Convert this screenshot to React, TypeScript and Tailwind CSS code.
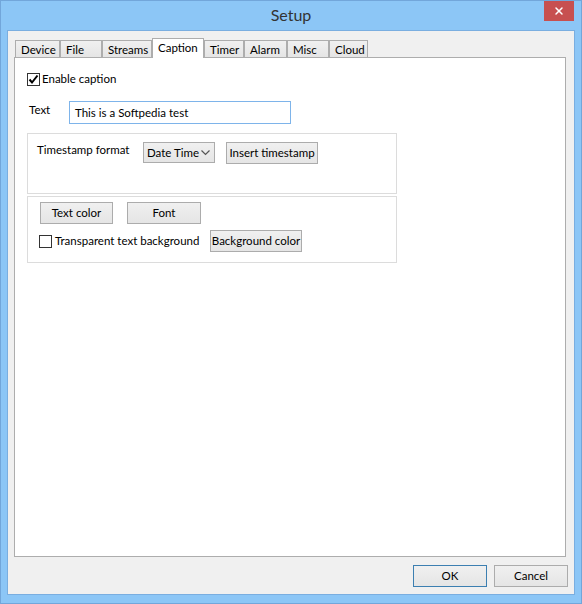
import { X } from 'lucide-react';

const font = { fontFamily: 'Lato, "Noto Sans", sans-serif' };

function Check({ checked }: { checked?: boolean }) {
    return (
        <span className="flex items-center justify-center w-[13px] h-[13px] border border-[#333333] bg-white shrink-0">
            {checked && (
                <svg width="11" height="11" viewBox="0 0 11 11">
                    <path d="M1.5 5.5 L4 8.5 L9.5 1.5" fill="none" stroke="#000" strokeWidth="2" />
                </svg>
            )}
        </span>
    );
}

function Btn({ label, w, blue }: { label: string; w: string; blue?: boolean }) {
    return (
        <button className={`${w} h-[22px] flex items-center justify-center whitespace-nowrap border ${blue ? 'border-[#3c7fb1]' : 'border-[#acacac]'} bg-gradient-to-b from-[#f0f0f0] to-[#e5e5e5] text-[11.5px] text-black leading-none`}>
            {label}
        </button>
    );
}

const tabs = [
    { name: 'Device', w: 'w-[45px]' },
    { name: 'File', w: 'w-[42px]' },
    { name: 'Streams', w: 'w-[50px]' },
    { name: 'Caption', w: 'w-[52px]', active: true },
    { name: 'Timer', w: 'w-[40px]' },
    { name: 'Alarm', w: 'w-[43px]' },
    { name: 'Misc', w: 'w-[42px]' },
    { name: 'Cloud', w: 'w-[39px]' },
];

export default function App() {
    return (
        <div style={font} className="w-[582px] h-[604px] bg-[#8cc6f6] border border-[#72a6da] flex flex-col text-[11.5px] leading-[16px] text-black whitespace-nowrap">
            {/* title bar */}
            <div className="h-[29px] relative flex justify-center pt-[5px]">
                <span className="text-[16px] leading-[18px] text-[#333]">Setup</span>
                <div className="absolute right-[7px] top-0 w-[30px] h-[20px] bg-[#c75050] flex items-center justify-center">
                    <X size={12} color="white" strokeWidth={3} />
                </div>
            </div>

            {/* client area */}
            <div className="mx-[6px] h-[565px] border border-[#7aaee0] bg-[#f0f0f0] flex flex-col">
                {/* tabs */}
                <div className="flex items-end h-[20px] mt-[7px] ml-[7px]">
                    {tabs.map((t) =>
                        t.active ? (
                            <div key={t.name} className={`${t.w} h-[20px] relative z-10 bg-white border border-b-0 border-[#adadad] pl-[5px] pt-[1px]`}>
                                {t.name}
                            </div>
                        ) : (
                            <div key={t.name} className={`${t.w} h-[18px] bg-gradient-to-b from-[#f0f0f0] to-[#e5e5e5] border border-[#adadad] pl-[5px] pt-[1px]`}>
                                {t.name}
                            </div>
                        )
                    )}
                </div>

                {/* panel */}
                <div className="ml-[6px] mt-[-1px] w-[552px] h-[500px] bg-white border border-[#adadad] flex flex-col">
                    <label className="flex items-center gap-[2px] ml-[12px] mt-[13px]">
                        <Check checked />
                        <span>Enable caption</span>
                    </label>

                    <div className="flex items-start ml-[14px] mt-[14px]">
                        <span className="w-[40px] mt-[1px]">Text</span>
                        <div className="w-[222px] h-[23px] border border-[#7eb4ea] flex items-center pl-[5px]">
                            This is a Softpedia test
                        </div>
                    </div>

                    {/* timestamp group */}
                    <div className="ml-[12px] mt-[9px] w-[370px] h-[61px] border border-[#dcdcdc] flex items-start">
                        <span className="ml-[9px] mt-[8px] w-[106px]">Timestamp format</span>
                        <div className="mt-[8px] w-[72px] h-[21px] border border-[#acacac] bg-gradient-to-b from-[#f0f0f0] to-[#e5e5e5] flex items-center justify-between pl-[3px] pr-[4px]">
                            <span>Date Time</span>
                            <svg width="9" height="6" viewBox="0 0 9 6">
                                <path d="M0.5 0.5 L4.5 4.5 L8.5 0.5" fill="none" stroke="#555" strokeWidth="1.2" />
                            </svg>
                        </div>
                        <div className="mt-[8px] ml-[11px]">
                            <Btn label="Insert timestamp" w="w-[92px]" />
                        </div>
                    </div>

                    {/* color group */}
                    <div className="ml-[12px] mt-[2px] w-[370px] h-[67px] border border-[#dcdcdc] flex flex-col">
                        <div className="flex gap-[14px] ml-[12px] mt-[5px]">
                            <Btn label="Text color" w="w-[73px]" />
                            <Btn label="Font" w="w-[74px]" />
                        </div>
                        <div className="flex items-center ml-[11px] mt-[6px]">
                            <Check />
                            <span className="ml-[3px] w-[155px]">Transparent text background</span>
                            <Btn label="Background color" w="w-[92px]" />
                        </div>
                    </div>
                </div>

                {/* dialog buttons */}
                <div className="flex justify-end gap-[7px] mt-[8px] mr-[6px]">
                    <Btn label="OK" w="w-[74px]" blue />
                    <Btn label="Cancel" w="w-[74px]" />
                </div>
            </div>
        </div>
    );
}
